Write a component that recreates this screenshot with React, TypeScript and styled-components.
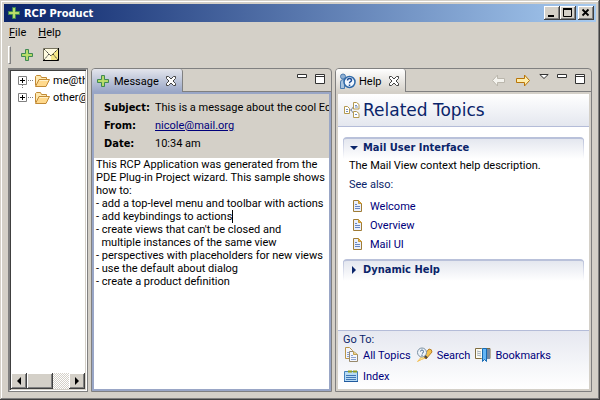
import React, { useState } from "react";
import styled, { createGlobalStyle, css } from "styled-components";

const face = "#d4d0c8";
const shadow = "#808080";
const dark = "#404040";
const navy = "#0a246a";
const link = "#00007b";
const steel = "#99a6c6";
const boldFont = `"DejaVu Sans Condensed", "Liberation Sans", sans-serif`;

const Global = createGlobalStyle`
  * { box-sizing: border-box; }
  body { margin: 0; background: ${face}; }
  body, button, textarea, a {
    font-family: Roboto, "Liberation Sans", sans-serif;
    font-size: 11px;
    line-height: 13px;
  }
  button { border: 0; padding: 0; margin: 0; background: none; color: inherit; display: inline-flex; align-items: center; }
  svg { display: block; flex: none; }
`;

const raised = css`
  background: ${face};
  box-shadow: inset -1px -1px ${dark}, inset 1px 1px #fff, inset -2px -2px ${shadow};
`;

const Window = styled.div`
  display: flex;
  flex-direction: column;
  height: 100vh;
  padding: 4px 4px 8px;
  background: ${face};
  box-shadow: inset -1px -1px ${dark}, inset 1px 1px ${face}, inset -2px -2px ${shadow}, inset 2px 2px #fff;
`;
const TitleBar = styled.header`
  display: flex;
  align-items: center;
  height: 18px;
  padding: 0 2px;
  background: linear-gradient(90deg, ${navy}, #a6caf0);
  color: #fff;
`;
const Title = styled.h1`
  flex: 1;
  margin: 0 0 0 2px;
  font-family: ${boldFont};
  font-size: 11px;
  line-height: 13px;
`;
const CaptionButton = styled.button<{ $apart?: boolean }>`
  ${raised}
  justify-content: center;
  width: 16px;
  height: 14px;
  margin-left: ${(p) => (p.$apart ? 2 : 0)}px;
`;
const MenuBar = styled.nav`
  display: flex;
  gap: 12px;
  height: 20px;
  padding: 0 5px;
`;
const MenuItem = styled.button`
  color: #000;
`;
const ToolBar = styled.div`
  display: flex;
  align-items: center;
  gap: 8px;
  height: 26px;
  padding: 0 4px;
`;
const Grip = styled.span`
  width: 3px;
  height: 18px;
  background: ${face};
  border: 1px solid #fff;
  border-right-color: ${shadow};
  border-bottom-color: ${shadow};
`;
const Workbench = styled.main`
  flex: 1;
  min-height: 0;
  display: grid;
  grid-template-columns: 80fr 241fr 257fr;
  gap: 3px;
  padding: 0 4px;
`;

const TreeFrame = styled.section`
  display: flex;
  min-width: 0;
  border: 1px solid ${shadow};
`;
const TreeWell = styled.div`
  flex: 1;
  min-width: 0;
  display: flex;
  flex-direction: column;
  border: 1px solid;
  border-color: ${shadow} #fff #fff ${shadow};
  box-shadow: inset 1px 1px ${dark}, inset -1px -1px ${face};
  padding: 1px;
  background: #fff;
`;
const TreeList = styled.ul`
  flex: 1;
  margin: 0;
  padding: 1px 0 0;
  list-style: none;
  overflow: hidden;
`;
const TreeRow = styled.li`
  display: flex;
  align-items: center;
  height: 17px;
  padding-left: 7px;
  white-space: nowrap;
`;
const Branch = styled.span`
  flex: none;
  width: 5px;
  margin: 0 1px;
  border-top: 1px dotted ${shadow};
`;
const Expander = styled.button<{ $joined?: boolean }>`
  flex: none;
  height: 17px;
  background: ${(p) =>
    p.$joined ? `repeating-linear-gradient(${shadow} 0 1px, #fff 1px 2px) 4px 100% / 1px 4px no-repeat` : "none"};
`;
const TreeLabel = styled.span`
  margin-left: 3px;
`;
const ScrollBar = styled.div`
  display: flex;
  height: 16px;
  background: repeating-conic-gradient(${face} 0 25%, #fff 0 50%) 0 0 / 2px 2px;
`;
const ScrollButton = styled.button`
  ${raised}
  width: 16px;
  justify-content: center;
`;
const Thumb = styled.div`
  ${raised}
  width: 26px;
  margin-right: auto;
`;

const Part = styled.section`
  display: flex;
  flex-direction: column;
  min-width: 0;
  min-height: 0;
  border: 1px solid ${shadow};
  border-radius: 4px 4px 0 0;
`;
const TabStrip = styled.div`
  display: flex;
  height: 23px;
`;
const Tab = styled.div<{ $active?: boolean }>`
  display: flex;
  align-items: center;
  gap: 3px;
  padding: 1px 5px 0 3px;
  border-right: 1px solid ${shadow};
  border-radius: 3px 3px 0 0;
  background: ${(p) => (p.$active ? `linear-gradient(#e3e5ec, ${steel})` : `linear-gradient(#fff, ${face})`)};
`;
const TabTitle = styled.h2`
  margin: 0;
  font-size: 11px;
  line-height: 13px;
  font-weight: normal;
`;
const CloseButton = styled.button`
  margin-left: 3px;
`;
const TabTools = styled.div`
  flex: 1;
  display: flex;
  justify-content: flex-end;
  align-items: flex-start;
  gap: 8px;
  padding: 4px 6px 0 0;
  border-bottom: 1px solid ${shadow};
`;
const PartBody = styled.div<{ $active?: boolean }>`
  flex: 1;
  min-height: 0;
  display: flex;
  flex-direction: column;
  border: 2px solid ${(p) => (p.$active ? steel : face)};
  background: #fff;
`;

const Fields = styled.dl`
  display: grid;
  grid-template-columns: 51px 1fr;
  grid-auto-rows: 18px;
  align-items: center;
  margin: 0;
  padding: 4px 0 6px 10px;
  background: ${face};
  white-space: nowrap;
  overflow: hidden;
`;
const Term = styled.dt`
  font-family: ${boldFont};
  font-weight: bold;
`;
const Detail = styled.dd`
  margin: 0;
  min-width: 0;
  overflow: hidden;
`;
const MailLink = styled.a`
  color: ${link};
`;
const Editor = styled.div`
  position: relative;
  flex: 1;
  display: flex;
`;
const MessageText = styled.textarea`
  flex: 1;
  min-width: 0;
  border: 0;
  outline: 0;
  resize: none;
  padding: 0 2px;
  white-space: pre;
  overflow: hidden;
  background: #fff;
  color: #000;
`;
const Caret = styled.span`
  position: absolute;
  left: 138px;
  top: 52px;
  width: 1px;
  height: 13px;
  background: #000;
`;

const HelpHeader = styled.header`
  display: flex;
  align-items: center;
  gap: 3px;
  height: 33px;
  padding-left: 6px;
  border-bottom: 1px solid #b4bcd8;
  background: linear-gradient(#fff, #e4e7ef);
`;
const HelpTitle = styled.h2`
  margin: 0;
  font-family: "DejaVu Sans", sans-serif;
  font-size: 17px;
  line-height: 20px;
  font-weight: normal;
  color: ${navy};
`;
const Sections = styled.div`
  flex: 1;
  padding: 10px 5px 0;
`;
const SectionHeader = styled.h3`
  margin: 0;
  height: 22px;
  border-top: 2px solid #b9c1da;
  border-radius: 4px 4px 0 0;
  background:
    linear-gradient(#b9c1da, #fff) left / 1px 100% no-repeat,
    linear-gradient(#b9c1da, #fff) right / 1px 100% no-repeat,
    linear-gradient(#e4e7ef, #fff);
`;
const SectionToggle = styled.button`
  gap: 3px;
  padding: 2px 0 0 5px;
  font-family: ${boldFont};
  font-weight: bold;
  color: ${navy};
`;
const SectionBody = styled.div`
  padding: 0 5px 5px 6px;
`;
const Blurb = styled.p<{ $tone?: string }>`
  margin: 0 0 6px;
  color: ${(p) => p.$tone ?? "#000"};
  white-space: nowrap;
`;
const LinkList = styled.ul`
  margin: 0;
  padding: 0 0 0 1px;
  list-style: none;
`;
const LinkRow = styled.li`
  display: flex;
  align-items: center;
  height: 19px;
`;
const HelpLink = styled.a`
  display: inline-flex;
  align-items: center;
  gap: 4px;
  color: ${link};
  text-decoration: none;
`;
const Footer = styled.footer`
  height: 59px;
  padding: 2px 5px 0;
  border-top: 1px solid #b4bcd8;
  background: linear-gradient(#e6e8f0, #fff);
  color: ${navy};
`;
const GoTo = styled.nav`
  display: flex;
  flex-wrap: wrap;
  padding-top: 1px;
  column-gap: 5px;
  row-gap: 5px;
`;

const Plus = () => (
  <svg width="16" height="16" viewBox="0 0 16 16">
    <path d="M6.500 2.500h3v4h4v3h-4v4h-3v-4h-4v-3h4z" fill="#a8d465" stroke="#3f8a52" />
    <path d="M8 3.500v9M3.500 8h9" stroke="#c5e36e" />
  </svg>
);
const Mail = () => (
  <svg width="16" height="14" viewBox="0 0 16 14">
    <rect x="1" y="1" width="14" height="11" fill="#fffbe0" />
    <path d="M8 7l7-6v11H8z" fill="#f6e887" />
    <path d="M1 1l7 7 7-7M1 12l5-6M15 12l-5-6" fill="none" stroke="#333" strokeDasharray="1.5 .7" />
    <path d="M.5 12V.5H15" fill="none" stroke="#77735f" />
    <path d="M0 12.500h15.500V0" fill="none" stroke="#000" />
  </svg>
);
const Folder = () => (
  <svg width="16" height="16" viewBox="0 0 16 16">
    <path d="M1.500 12.500v-9l1-1h4l1 2h5v2" fill="#ffe9b0" stroke="#c28a35" />
    <path d="M1.500 13.500L5 6.500h10.500L12 13.500z" fill="#ffd98c" stroke="#c28a35" strokeLinejoin="round" />
    <path d="M5.500 7.500h8.500" stroke="#fff0c8" />
  </svg>
);
const Cross = () => (
  <svg width="12" height="12" viewBox="0 0 12 12">
    <path d="M1.500 1.500h2l2.500 2.500 2.500-2.500h2v2L8 6l2.500 2.500v2h-2L6 8l-2.500 2.500h-2v-2L4 6 1.500 3.500z" fill="#fff" stroke="#444" />
  </svg>
);
const Minimize = () => (
  <svg width="10" height="10" viewBox="0 0 10 10"><path d="M.5 1.500h9v3h-9z" fill="#fff" stroke="#333" /></svg>
);
const Maximize = () => (
  <svg width="10" height="11" viewBox="0 0 10 11"><path d="M.5 1.500h9v9h-9zM0 3.500h10" fill="#fff" stroke="#333" /></svg>
);
const ViewMenu = () => (
  <svg width="10" height="10" viewBox="0 0 10 10"><path d="M.8 1.500h8.400L5 5.500z" fill="#fff" stroke="#333" /></svg>
);
const Arrow = ({ back }: { back?: boolean }) => (
  <svg width="16" height="16" viewBox="0 0 16 16">
    {back ? (
      <path d="M1.500 7.500l5-5.500v3.500h7v4h-7V13z" fill="#f4f3ee" stroke="#bbb7ad" />
    ) : (
      <path d="M14.500 7.500l-5-5.500v3.500h-8v4h8V13z" fill="#ffedaa" stroke="#b97508" />
    )}
  </svg>
);
const HelpMark = () => (
  <svg width="17" height="17" viewBox="0 0 17 17">
    <circle cx="4" cy="3.500" r="2.500" fill="#8fb0d3" stroke="#4d7caf" />
    <path d="M1.500 15.500V9q0-2.500 3-2.500h1v9z" fill="#a9c4df" stroke="#4d7caf" />
    <circle cx="10.500" cy="9" r="5.500" fill="#f3f8ff" stroke="#2f69a8" strokeWidth="1.500" />
    <path d="M8.500 7.500q0-2 2-2t2 1.700q0 1-1 1.500t-1 1.500M10.500 11.500v1.500" fill="none" stroke="#1f4f96" strokeWidth="1.500" />
  </svg>
);
const Topics = () => (
  <svg width="16" height="16" viewBox="0 0 16 16">
    <path d="M5 8h2l3-4M7 8l3 4" fill="none" stroke="#7a8498" />
    <path d="M.5 4.500h3l2 2v5h-5zM9.500.5h3l2.500 2v4.500H9.500zM9.500 9.500h3l2.500 2v4H9.500z" fill="#fff" stroke="#b49a50" />
    <path d="M2 7.500h2M2 9.500h2M11 3.500h2M11 5h3M11 12.500h2" stroke="#7791bd" />
  </svg>
);
const Page = () => (
  <svg width="16" height="16" viewBox="0 0 16 16">
    <path d="M3.500 1.500h5l3 3v8h-8z" fill="#e9effc" stroke="#a07c35" />
    <path d="M8.500 1.500v3h3z" fill="#e3b84f" stroke="#c99835" />
    <path d="M5 5.500h2M5 7.500h5M5 9.500h5" stroke="#6685c2" />
  </svg>
);
const Pages = () => (
  <svg width="16" height="16" viewBox="0 0 16 16">
    <path d="M2.500.5h4l3 3v8h-7z" fill="#f3f6ff" stroke="#b99549" />
    <path d="M6.500 4.500h4l4 3v7h-8z" fill="#f3f6ff" stroke="#98896b" />
    <path d="M10.500 4.500v3h4" fill="#ead28c" stroke="#c3a052" />
    <path d="M4 5.500h2M4 7.500h2M4 9.500h2M8 8.500h2M8 10.500h5M8 12.500h5" stroke="#8ca1cd" />
  </svg>
);
const SearchMark = () => (
  <svg width="17" height="16" viewBox="0 0 17 16">
    <path d="M1.500 14.500l6-7 3 3-5 2z" fill="#ffe795" stroke="#f3c25b" />
    <path d="M7 9l6-7q3 0 3 3l-6 7z" fill="#f4c34e" stroke="#b97e27" />
    <circle cx="6" cy="5.500" r="4.500" fill="#eef3f8" stroke="#7990a3" />
    <path d="M4.500 4.500q0-1.500 1.500-1.500t1.500 1.500T6 6.500M6 7.500V9" fill="none" stroke="#4a6d91" />
    <path d="M9 9l2 2" stroke="#444" strokeWidth="2" />
  </svg>
);
const Bookmark = () => (
  <svg width="16" height="16" viewBox="0 0 16 16">
    <path d="M.5 11.500v-10h6l1.500 1 1.500-1h5.500v10H9.500L8 13l-1.500-1.500z" fill="#fdfdf4" stroke="#806d40" />
    <path d="M12 2h3v10h-3z" fill="#7388a2" />
    <path d="M2 4l4 1M2 6l4 1M2 8l4 1" stroke="#a3adb9" />
    <path d="M7.500 1.500h4v13l-2-2-2 2z" fill="#64b6f5" stroke="#176bb4" />
  </svg>
);
const Index = () => (
  <svg width="16" height="16" viewBox="0 0 16 16">
    <path d="M1.500 3.500h13v10h-13z" fill="#b8dcf5" stroke="#4381bb" />
    <path d="M1 13.500h14" stroke="#20599d" />
    <path d="M5 3.500h4M10 3.500h4" stroke="#8f9f24" strokeWidth="2" />
    <path d="M3 7.500h10M3 9.500h10M3 11.500h10" stroke="#3f76b6" />
  </svg>
);

const message = `This RCP Application was generated from the
PDE Plug-in Project wizard. This sample shows
how to:
- add a top-level menu and toolbar with actions
- add keybindings to actions
- create views that can't be closed and
  multiple instances of the same view
- perspectives with placeholders for new views
- use the default about dialog
- create a product definition`;

const goTo = [
  { label: "All Topics", icon: <Pages /> },
  { label: "Search", icon: <SearchMark /> },
  { label: "Bookmarks", icon: <Bookmark /> },
  { label: "Index", icon: <Index /> },
];

function HelpSection({ title, initiallyOpen, children }: { title: string; initiallyOpen?: boolean; children?: React.ReactNode }) {
  const [open, setOpen] = useState(!!initiallyOpen);
  return (
    <section>
      <SectionHeader>
        <SectionToggle aria-expanded={open} onClick={() => setOpen(!open)}>
          <svg width="12" height="12" viewBox="0 0 12 12" fill={navy}>
            <path d={open ? "M2 4h8L6 8z" : "M4 2v8l4-4z"} />
          </svg>
          {title}
        </SectionToggle>
      </SectionHeader>
      {open && <SectionBody>{children}</SectionBody>}
    </section>
  );
}

export default function App() {
  const [text, setText] = useState(message);
  return (
    <Window>
      <Global />
      <TitleBar>
        <Plus />
        <Title>RCP Product</Title>
        <CaptionButton aria-label="Minimize window">
          <svg width="10" height="10" viewBox="0 0 10 10"><path d="M1 7h6v2H1z" /></svg>
        </CaptionButton>
        <CaptionButton aria-label="Maximize window">
          <svg width="10" height="10" viewBox="0 0 10 10"><path d="M.5 0v8.500h8V0M0 1h9" fill="none" stroke="#000" /><path d="M0 0h9v2H0z" /></svg>
        </CaptionButton>
        <CaptionButton $apart aria-label="Close window">
          <svg width="10" height="10" viewBox="0 0 10 10"><path d="M1.500 1.500l6 6M7.500 1.500l-6 6" stroke="#000" strokeWidth="1.800" /></svg>
        </CaptionButton>
      </TitleBar>
      <MenuBar>
        <MenuItem><span><u>F</u>ile</span></MenuItem>
        <MenuItem><span><u>H</u>elp</span></MenuItem>
      </MenuBar>
      <ToolBar>
        <Grip />
        <button aria-label="Open mailbox"><Plus /></button>
        <button aria-label="Open message"><Mail /></button>
      </ToolBar>
      <Workbench>
        <TreeFrame>
          <TreeWell>
            <TreeList>
              {["me@this.com", "other@aol.com"].map((name, i) => (
                <TreeRow key={name}>
                  <Expander $joined={i === 0} aria-label="Expand">
                    <svg width="9" height="9" viewBox="0 0 9 9">
                      <path d="M.5.5h8v8h-8z" fill="#fff" stroke={shadow} />
                      <path d="M2 4.500h5M4.500 2v5" stroke="#000" />
                    </svg>
                  </Expander>
                  <Branch />
                  <Folder />
                  <TreeLabel>{name}</TreeLabel>
                </TreeRow>
              ))}
            </TreeList>
            <ScrollBar>
              <ScrollButton aria-label="Scroll left">
                <svg width="8" height="8" viewBox="0 0 8 8"><path d="M6 0v8L2 4z" /></svg>
              </ScrollButton>
              <Thumb />
              <ScrollButton aria-label="Scroll right">
                <svg width="8" height="8" viewBox="0 0 8 8"><path d="M2 0v8l4-4z" /></svg>
              </ScrollButton>
            </ScrollBar>
          </TreeWell>
        </TreeFrame>

        <Part>
          <TabStrip>
            <Tab $active>
              <Plus />
              <TabTitle>Message</TabTitle>
              <CloseButton aria-label="Close Message"><Cross /></CloseButton>
            </Tab>
            <TabTools>
              <button aria-label="Minimize"><Minimize /></button>
              <button aria-label="Maximize"><Maximize /></button>
            </TabTools>
          </TabStrip>
          <PartBody $active>
            <Fields>
              <Term>Subject:</Term>
              <Detail>This is a message about the cool Eclipse RCP!</Detail>
              <Term>From:</Term>
              <Detail><MailLink href="mailto:nicole@mail.org">nicole@mail.org</MailLink></Detail>
              <Term>Date:</Term>
              <Detail>10:34 am</Detail>
            </Fields>
            <Editor>
              <MessageText aria-label="Message text" value={text} onChange={(e) => setText(e.target.value)} />
              <Caret />
            </Editor>
          </PartBody>
        </Part>

        <Part>
          <TabStrip>
            <Tab>
              <HelpMark />
              <TabTitle>Help</TabTitle>
              <CloseButton aria-label="Close Help"><Cross /></CloseButton>
            </Tab>
            <TabTools>
              <button aria-label="Back"><Arrow back /></button>
              <button aria-label="Forward"><Arrow /></button>
              <button aria-label="View menu"><ViewMenu /></button>
              <button aria-label="Minimize"><Minimize /></button>
              <button aria-label="Maximize"><Maximize /></button>
            </TabTools>
          </TabStrip>
          <PartBody>
            <HelpHeader>
              <Topics />
              <HelpTitle>Related Topics</HelpTitle>
            </HelpHeader>
            <Sections>
              <HelpSection title="Mail User Interface" initiallyOpen>
                <Blurb>The Mail View context help description.</Blurb>
                <Blurb $tone={navy}>See also:</Blurb>
                <LinkList>
                  {["Welcome", "Overview", "Mail UI"].map((label) => (
                    <LinkRow key={label}><HelpLink href="#"><Page />{label}</HelpLink></LinkRow>
                  ))}
                </LinkList>
              </HelpSection>
              <HelpSection title="Dynamic Help" />
            </Sections>
            <Footer>
              Go To:
              <GoTo>
                {goTo.map(({ label, icon }) => (
                  <HelpLink key={label} href="#">{icon}{label}</HelpLink>
                ))}
              </GoTo>
            </Footer>
          </PartBody>
        </Part>
      </Workbench>
    </Window>
  );
}
